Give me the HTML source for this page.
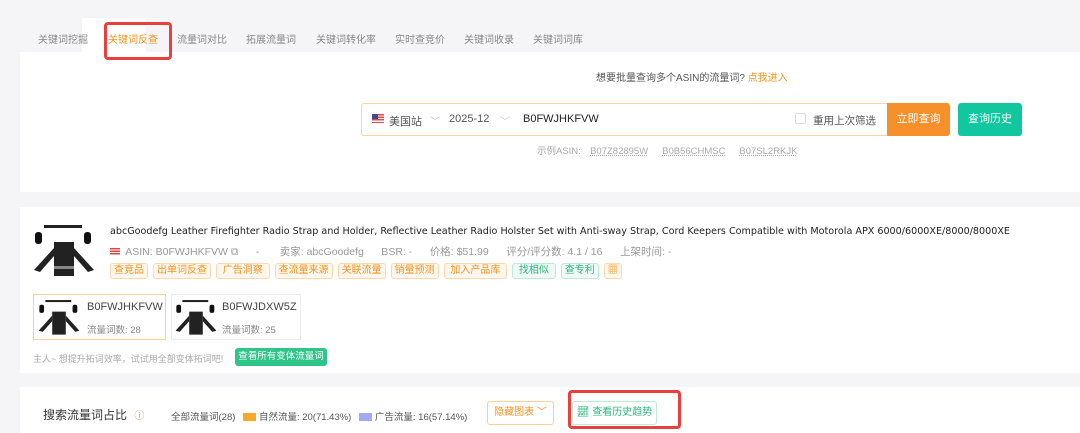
<!DOCTYPE html>
<html><head><meta charset="utf-8"><style>
*{margin:0;padding:0;box-sizing:border-box}
body{width:1080px;height:433px;background:#f5f5f7;font-family:"Liberation Sans","Noto Sans CJK SC",sans-serif;position:relative;overflow:hidden;font-size:12px;color:#333}
.abs{position:absolute}
.tab{position:absolute;top:31px;font-size:10px;color:#888}
.panel{position:absolute;left:20px;right:0;background:#fff}
.tag{display:inline-block;height:16px;line-height:14px;padding:0 3px;border:1px solid #fbd9b0;background:#fff7ee;color:#f39420;font-size:10px;border-radius:3px;margin-right:5px}
.tag.g{border-color:#bfe9d8;background:#effaf5;color:#2bb57e}
.meta{color:#999;font-size:10.5px}
</style></head><body>
<div class="abs" style="left:82px;top:18px;width:64px;height:36px;background:#fff"></div>
<div class="tab" style="left:38px">关键词挖掘</div>
<div class="tab" style="left:108px;color:#f39420">关键词反查</div>
<div class="tab" style="left:177px">流量词对比</div>
<div class="tab" style="left:246px">拓展流量词</div>
<div class="tab" style="left:316px">关键词转化率</div>
<div class="tab" style="left:395px">实时查竞价</div>
<div class="tab" style="left:464px">关键词收录</div>
<div class="tab" style="left:533px">关键词词库</div>
<div class="panel" style="top:52px;height:140px"></div>
<div class="abs" style="left:104px;top:22px;width:68px;height:38px;border:3px solid #e8403f;border-radius:4px"></div>
<div class="abs" style="left:596px;top:69px;font-size:10px;color:#555">想要批量查询多个ASIN的流量词? <span style="color:#f39420">点我进入</span></div>
<div class="abs" style="left:361px;top:103px;width:589px;height:33px;border:1px solid #fbd3a4;border-radius:3px;background:#fff"></div>
<div class="abs" style="left:372px;top:114px;width:12px;height:9px;background:repeating-linear-gradient(#d44 0 1.3px,#fff 1.3px 2.6px)"><div style="width:6px;height:5px;background:#3c4d8a"></div></div>
<div class="abs" style="left:389px;top:113px;font-size:11px;color:#555">美国站</div>
<div class="abs" style="left:430px;top:113px;font-size:10px;color:#ccc">﹀</div>
<div class="abs" style="left:449px;top:113px;font-size:11px;color:#555">2025-12</div>
<div class="abs" style="left:500px;top:113px;font-size:10px;color:#ccc">﹀</div>
<div class="abs" style="left:523px;top:113px;font-size:11px;color:#222">B0FWJHKFVW</div>
<div class="abs" style="left:795px;top:113px;width:11px;height:11px;border:1px solid #ddd;border-radius:2px"></div>
<div class="abs" style="left:813px;top:113px;font-size:10.5px;color:#555">重用上次筛选</div>
<div class="abs" style="left:887px;top:103px;width:63px;height:33px;background:#f7902a;border-radius:0 3px 3px 0;color:#fff;font-size:11px;text-align:center;line-height:33px">立即查询</div>
<div class="abs" style="left:958px;top:103px;width:64px;height:33px;background:#11c7a0;border-radius:3px;color:#fff;font-size:11px;text-align:center;line-height:33px">查询历史</div>
<div class="abs" style="left:537px;top:143px;font-size:9.5px;color:#aaa;word-spacing:2px">示例ASIN: &nbsp;<span style="text-decoration:underline dotted">B07Z82895W</span>&nbsp;&nbsp; <span style="text-decoration:underline dotted">B0B56CHMSC</span>&nbsp;&nbsp; <span style="text-decoration:underline dotted">B07SL2RKJK</span></div>

<div class="panel" style="top:207px;height:166px"></div>
<svg class="abs" style="left:32px;top:220px" width="64" height="60" viewBox="0 0 64 56"><rect x="12" y="3" width="38" height="3" fill="#222"/><rect x="3" y="10" width="7" height="12" rx="3" fill="#111"/><rect x="52" y="10" width="7" height="12" rx="3" fill="#111"/><path d="M22 20h20v34h-20z" fill="#222"/><path d="M2 48l20-22v8l-14 16z M62 48l-20-22v8l14 16z" fill="#222"/><rect x="22" y="44" width="20" height="3" fill="#888"/></svg>
<div class="abs" style="left:110px;top:226px;color:#222;font-family:'DejaVu Sans',sans-serif;font-size:9.6px">abcGoodefg Leather Firefighter Radio Strap and Holder, Reflective Leather Radio Holster Set with Anti-sway Strap, Cord Keepers Compatible with Motorola APX 6000/6000XE/8000/8000XE</div>
<div class="abs meta" style="left:110px;top:244px"><span style="display:inline-block;width:10px;height:8px;background:repeating-linear-gradient(#d44 0 1.3px,#fff 1.3px 2.6px);vertical-align:middle"></span>&nbsp; ASIN: B0FWJHKFVW ⧉ &nbsp;&nbsp;&nbsp;&nbsp; - &nbsp;&nbsp;&nbsp;&nbsp;&nbsp; 卖家: abcGoodefg &nbsp;&nbsp;&nbsp;&nbsp; BSR: - &nbsp;&nbsp;&nbsp;&nbsp; 价格: $51.99 &nbsp;&nbsp;&nbsp;&nbsp; 评分/评分数: 4.1 / 16 &nbsp;&nbsp;&nbsp;&nbsp; 上架时间: -</div>
<div class="abs" style="left:110px;top:262px;white-space:nowrap"><span class="tag">查竞品</span><span class="tag">出单词反查</span><span class="tag">&nbsp;广告洞察&nbsp;</span><span class="tag">查流量来源</span><span class="tag">关联流量</span><span class="tag">销量预测</span><span class="tag">&nbsp;加入产品库&nbsp;</span><span class="tag g">&nbsp;找相似&nbsp;</span><span class="tag g">查专利</span><span class="tag" style="padding:0 3px">▦</span></div>
<div class="abs" style="left:33px;top:294px;width:133px;height:46px;border:1px solid #fbcf9c"></div>
<div class="abs" style="left:171px;top:294px;width:130px;height:46px;border:1px solid #eee"></div>
<svg class="abs" style="left:37px;top:298px" width="44" height="38" viewBox="0 0 64 56"><rect x="12" y="3" width="38" height="3" fill="#222"/><rect x="3" y="10" width="7" height="12" rx="3" fill="#111"/><rect x="52" y="10" width="7" height="12" rx="3" fill="#111"/><path d="M22 20h20v34h-20z" fill="#222"/><path d="M2 48l20-22v8l-14 16z M62 48l-20-22v8l14 16z" fill="#222"/></svg>
<svg class="abs" style="left:174px;top:298px" width="44" height="38" viewBox="0 0 64 56"><rect x="12" y="3" width="38" height="3" fill="#222"/><rect x="3" y="10" width="7" height="12" rx="3" fill="#111"/><rect x="52" y="10" width="7" height="12" rx="3" fill="#111"/><path d="M22 20h20v34h-20z" fill="#222"/><path d="M2 48l20-22v8l-14 16z M62 48l-20-22v8l14 16z" fill="#222"/></svg>
<div class="abs" style="left:87px;top:301px;font-size:11px;color:#444">B0FWJHKFVW</div>
<div class="abs" style="left:87px;top:322px;font-size:9.5px;color:#888">流量词数: 28</div>
<div class="abs" style="left:222px;top:301px;font-size:11px;color:#444">B0FWJDXW5Z</div>
<div class="abs" style="left:222px;top:322px;font-size:9.5px;color:#888">流量词数: 25</div>
<div class="abs" style="left:33px;top:352px;font-size:9px;color:#aaa">主人~ 想提升拓词效率，试试用全部变体拓词吧!</div>
<div class="abs" style="left:235px;top:348px;width:92px;height:18px;background:#2ec48a;border-radius:3px;color:#fff;font-size:9.5px;text-align:center;line-height:18px">查看所有变体流量词</div>

<div class="panel" style="top:387px;height:46px"></div>
<div class="abs" style="left:43px;top:406px;font-size:12px;color:#333">搜索流量词占比 <span style="color:#f39420;font-size:10px;margin-left:4px">ⓘ</span></div>
<div class="abs" style="left:171px;top:409px;font-size:9.5px;color:#555">全部流量词(28) &nbsp;&nbsp;<span style="display:inline-block;width:13px;height:8px;background:#f7a92b;vertical-align:middle"></span> 自然流量: 20(71.43%) &nbsp;&nbsp;<span style="display:inline-block;width:13px;height:8px;background:#a4a9f5;vertical-align:middle"></span> 广告流量: 16(57.14%)</div>
<div class="abs" style="left:487px;top:401px;width:67px;height:24px;border:1px solid #fbcf9c;border-radius:3px;color:#f39420;font-size:10px;text-align:center;line-height:22px">隐藏图表 ﹀</div>
<div class="abs" style="left:572px;top:401px;width:85px;height:24px;border:1px solid #bfe9d8;border-radius:3px;color:#2bb57e;font-size:10px;text-align:center;line-height:22px">📈︎ 查看历史趋势</div>
<div class="abs" style="left:568px;top:390px;width:113px;height:39px;border:3px solid #e8403f;border-radius:4px"></div>
</body></html>
